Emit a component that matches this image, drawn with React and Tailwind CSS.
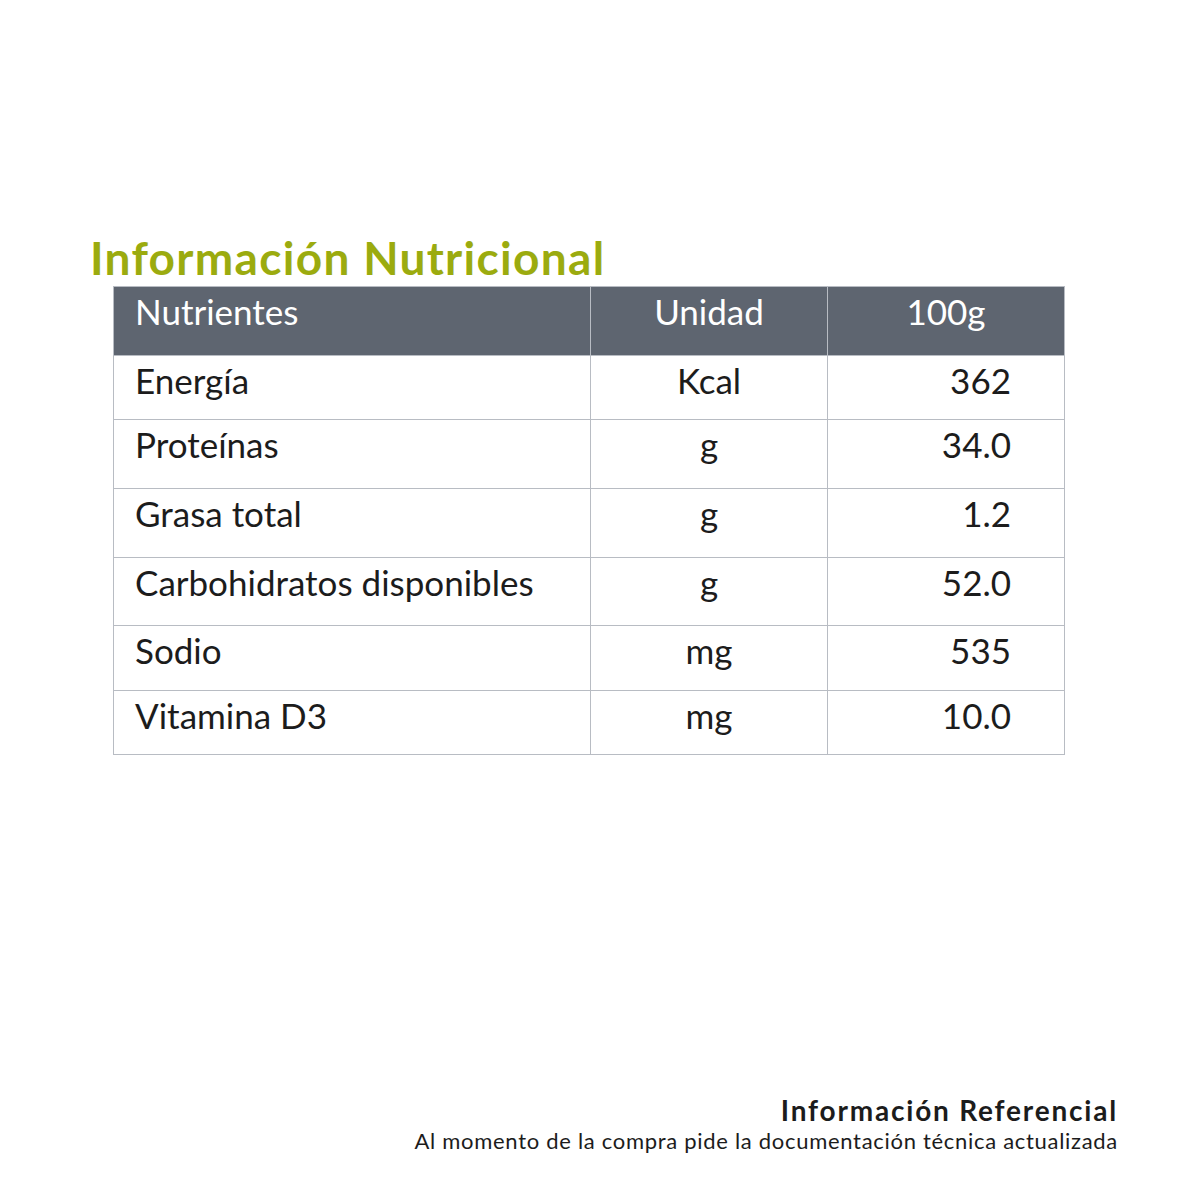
const rows = [
  { name: 'Energía', unit: 'Kcal', value: '362', h: 'h-[64px]' },
  { name: 'Proteínas', unit: 'g', value: '34.0', h: 'h-[69px]' },
  { name: 'Grasa total', unit: 'g', value: '1.2', h: 'h-[69px]' },
  { name: 'Carbohidratos disponibles', unit: 'g', value: '52.0', h: 'h-[68px]' },
  { name: 'Sodio', unit: 'mg', value: '535', h: 'h-[65px]' },
  { name: 'Vitamina D3', unit: 'mg', value: '10.0', h: 'h-[64px]' },
]

// nutrition facts sheet
const App = () => {
  return (
    <div className="w-[1195px] h-[1195px] bg-white flex flex-col font-['Lato','Open_Sans',sans-serif] text-[#1c1c1c]">
      <h1 className="ml-[90px] mt-[232px] text-[46px] leading-[52px] tracking-[1.3px] font-bold text-[#9bab0f]">
        Información Nutricional
      </h1>
      <table className="ml-[113px] mt-[2px] w-[951px] border-collapse table-fixed">
        <colgroup>
          <col className="w-[477px]" />
          <col className="w-[237px]" />
          <col className="w-[237px]" />
        </colgroup>
        <thead>
          <tr className="h-[69px] bg-[#5e6570] text-white text-[35px] leading-[40px]">
            <th className="font-normal text-left align-top pt-[4px] pl-[21px] border border-[#b8bcc3]">Nutrientes</th>
            <th className="font-normal text-center align-top pt-[4px] border border-[#b8bcc3]">Unidad</th>
            <th className="font-normal text-center align-top pt-[4px] border border-[#b8bcc3]">100g</th>
          </tr>
        </thead>
        <tbody className="text-[35px] leading-[40px]">
          {rows.map((r) => (
            <tr key={r.name} className={r.h}>
              <td className="align-top pt-[4px] pl-[21px] border border-[#b8bcc3]">{r.name}</td>
              <td className="align-top pt-[4px] text-center border border-[#b8bcc3]">{r.unit}</td>
              <td className="align-top pt-[4px] pr-[53px] text-right border border-[#b8bcc3]">{r.value}</td>
            </tr>
          ))}
        </tbody>
      </table>
      <div className="mt-auto mb-[40px] mr-[77px] self-end text-right">
        <p className="text-[28px] leading-[34px] tracking-[1.8px] font-bold">Información Referencial</p>
        <p className="text-[22px] leading-[28px] tracking-[0.7px]">Al momento de la compra pide la documentación técnica actualizada</p>
      </div>
    </div>
  )
}

export default App
